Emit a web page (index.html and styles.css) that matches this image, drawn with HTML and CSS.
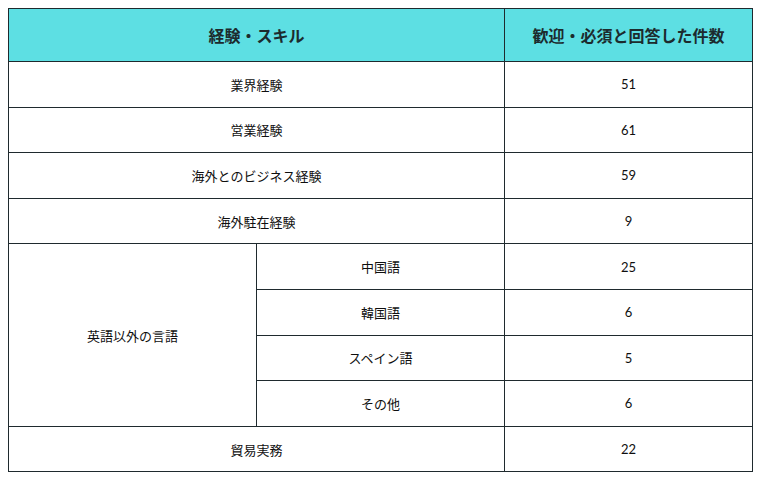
FILE: index.html
```html
<!DOCTYPE html>
<html lang="ja">
<head>
<meta charset="utf-8">
<link rel="stylesheet" href="styles.css">
</head>
<body>
<table class="skills">
  <colgroup>
    <col class="col">
    <col class="col">
    <col class="col">
  </colgroup>
  <thead>
    <tr class="head">
      <th colspan="2">経験・スキル</th>
      <th>歓迎・必須と回答した件数</th>
    </tr>
  </thead>
  <tbody>
    <tr><td colspan="2">業界経験</td><td>51</td></tr>
    <tr><td colspan="2">営業経験</td><td>61</td></tr>
    <tr><td colspan="2">海外とのビジネス経験</td><td>59</td></tr>
    <tr><td colspan="2">海外駐在経験</td><td>9</td></tr>
    <tr><td rowspan="4">英語以外の言語</td><td>中国語</td><td>25</td></tr>
    <tr><td>韓国語</td><td>6</td></tr>
    <tr><td>スペイン語</td><td>5</td></tr>
    <tr><td>その他</td><td>6</td></tr>
    <tr><td colspan="2">貿易実務</td><td>22</td></tr>
  </tbody>
</table>
</body>
</html>
```

FILE: styles.css
```css
html, body {
  margin: 0;
  padding: 0;
  background: #ffffff;
}
body {
  padding: 8px;
  font-family: "Lato", "Noto Sans CJK JP", sans-serif;
  color: #0f0f0f;
}
.skills {
  width: 744px;
  border-collapse: collapse;
  table-layout: fixed;
}
.skills .col {
  width: 248px;
}
.skills th,
.skills td {
  border: 1px solid #1f2a2e;
  text-align: center;
  vertical-align: middle;
  padding: 0;
}
.skills .head th {
  background: #5ddfe3;
  height: 52px;
  font-size: 16px;
  font-weight: bold;
  color: #1c2b2e;
}
.skills td {
  height: 44.6px;
  font-size: 13px;
  font-weight: 400;
}
```
